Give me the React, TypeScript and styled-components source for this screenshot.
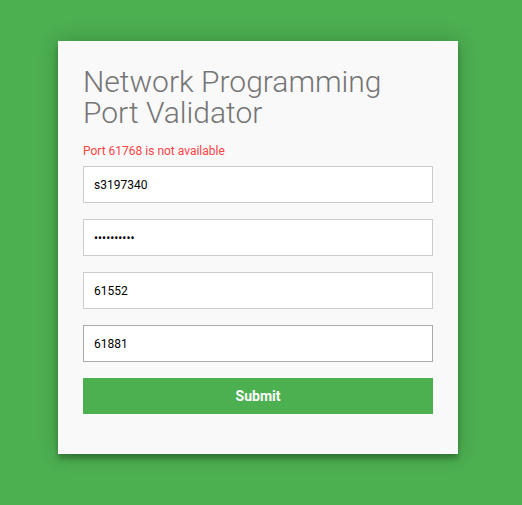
import React from "react";
import styled, { createGlobalStyle } from "styled-components";

const GlobalStyle = createGlobalStyle`
  html, body {
    margin: 0;
    padding: 0;
    background: #4caf50;
    font-family: Roboto, "Liberation Sans", sans-serif;
  }
`;

const Page = styled.div`
  min-height: 505px;
  box-sizing: border-box;
  padding: 41px 0 0 58px;
`;

const Card = styled.form`
  width: 400px;
  box-sizing: border-box;
  background: #f9f9f9;
  padding: 25px 25px 40px;
  box-shadow: 0 0 20px 0 rgba(0, 0, 0, 0.2), 0 5px 5px 0 rgba(0, 0, 0, 0.24);
  display: flex;
  flex-direction: column;
`;

const Title = styled.h1`
  margin: 0;
  font-size: 30px;
  line-height: 31px;
  font-weight: 300;
  color: #757575;
`;

const ErrorText = styled.p`
  margin: 16px 0 8px;
  font-size: 12px;
  line-height: 14px;
  color: #f44;
`;

const Field = styled.input<{ $active?: boolean }>`
  display: block;
  width: 100%;
  height: 37px;
  box-sizing: border-box;
  margin: 0 0 16px;
  padding: 0 10px;
  border: 1px solid ${(p) => (p.$active ? "#aaa" : "#ccc")};
  background: #fff;
  font-family: Roboto, "Liberation Sans", sans-serif;
  font-size: 12px;
  color: #000;
  outline: none;
  border-radius: 0;
`;

const SubmitButton = styled.button`
  display: block;
  width: 100%;
  height: 36px;
  border: none;
  background: #4caf50;
  color: #fff;
  font-family: Roboto, "Liberation Sans", sans-serif;
  font-size: 14px;
  font-weight: 700;
  cursor: pointer;
`;

export default function App() {
  return (
    <>
      <GlobalStyle />
      <Page>
        <Card onSubmit={(e) => e.preventDefault()}>
          <Title>
            Network Programming
            <br />
            Port Validator
          </Title>
          <ErrorText>Port 61768 is not available</ErrorText>
          <Field type="text" defaultValue="s3197340" />
          <Field type="password" defaultValue="abcdefghij" />
          <Field type="text" defaultValue="61552" />
          <Field type="text" defaultValue="61881" $active />
          <SubmitButton type="submit">Submit</SubmitButton>
        </Card>
      </Page>
    </>
  );
}
